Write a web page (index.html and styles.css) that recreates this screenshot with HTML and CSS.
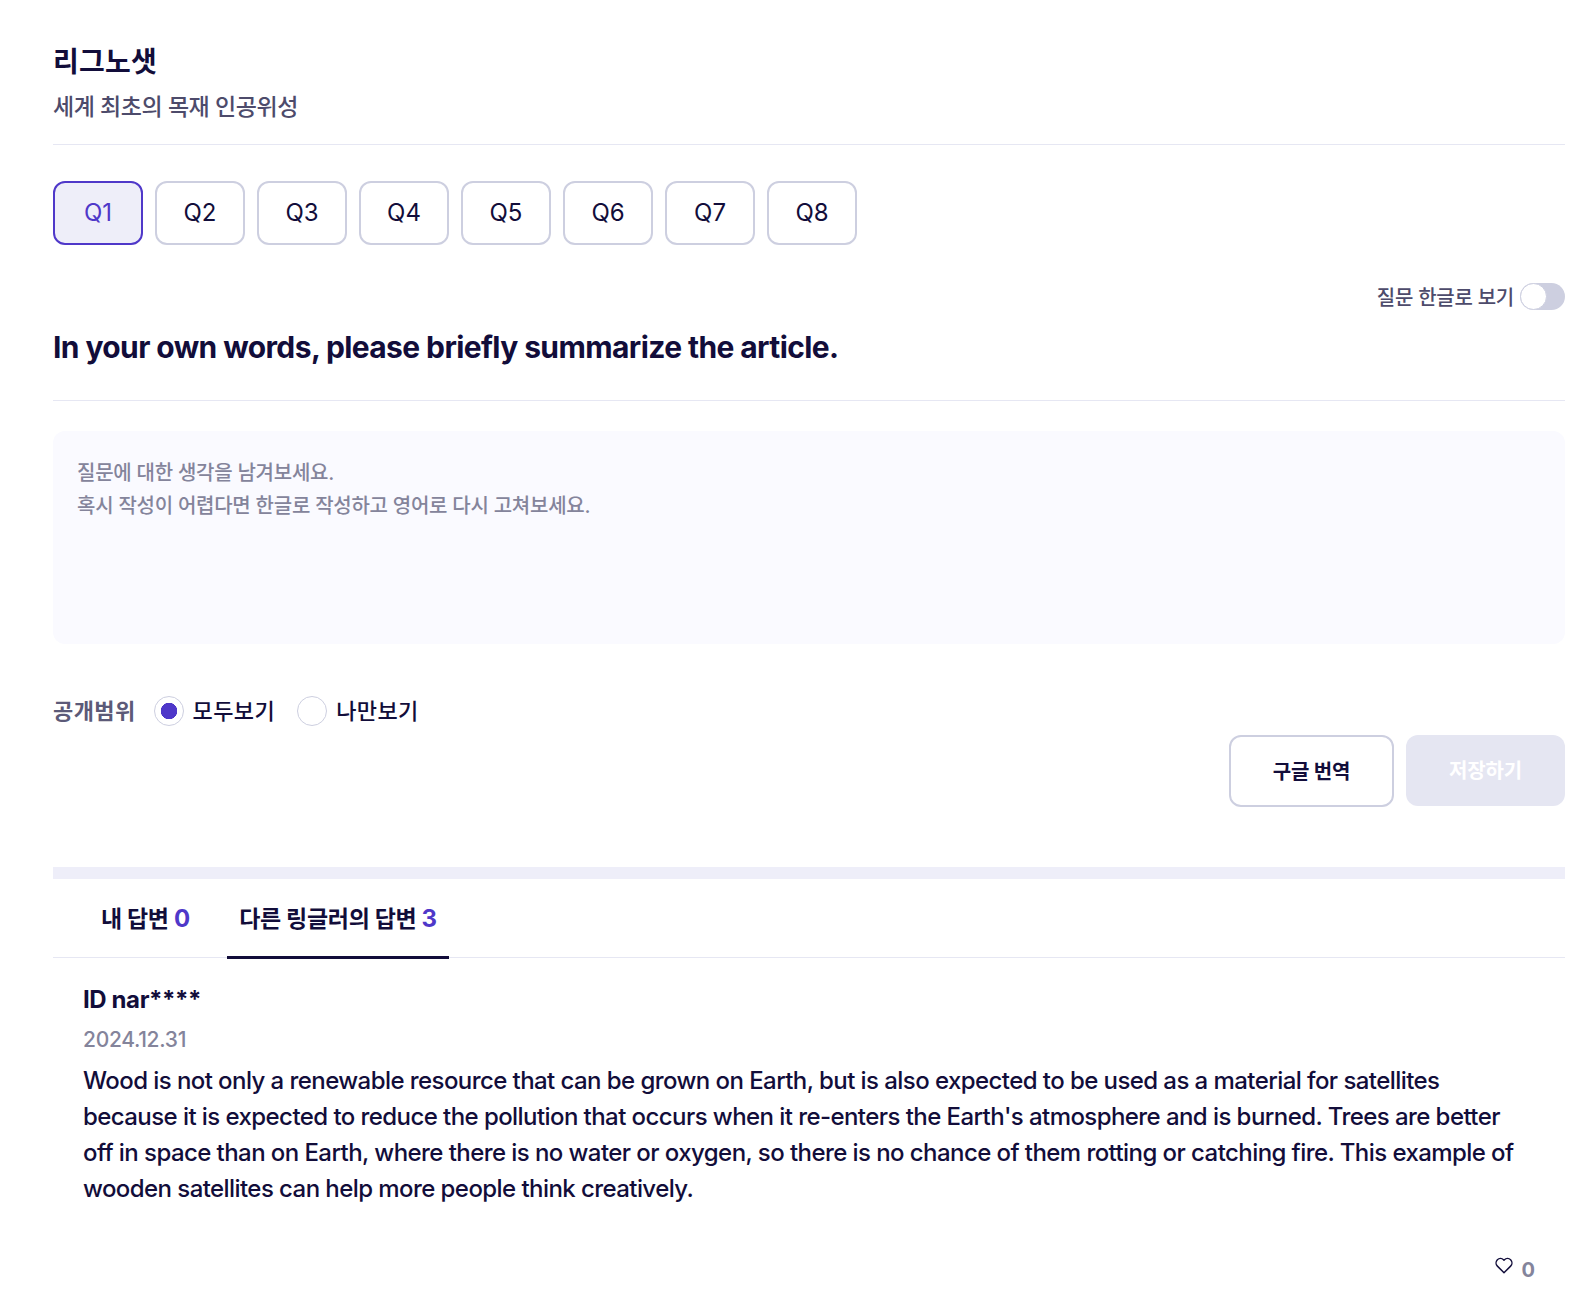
FILE: index.html
```html
<!DOCTYPE html>
<html lang="ko">
<head>
<meta charset="utf-8">
<title>리그노샛</title>
<link rel="stylesheet" href="styles.css">
</head>
<body>
<main class="page">
  <header class="head">
    <h1 class="title">리그노샛</h1>
    <p class="subtitle">세계 최초의 목재 인공위성</p>
  </header>
  <nav class="qtabs">
    <button class="qtab active">Q1</button>
    <button class="qtab">Q2</button>
    <button class="qtab">Q3</button>
    <button class="qtab">Q4</button>
    <button class="qtab">Q5</button>
    <button class="qtab">Q6</button>
    <button class="qtab">Q7</button>
    <button class="qtab">Q8</button>
  </nav>
  <div class="toggle-row">
    <span class="toggle-label">질문 한글로 보기</span>
    <span class="toggle"><span class="knob"></span></span>
  </div>
  <h2 class="question">In your own words, please briefly summarize the article.</h2>
  <div class="answer-box">질문에 대한 생각을 남겨보세요.<br>혹시 작성이 어렵다면 한글로 작성하고 영어로 다시 고쳐보세요.</div>
  <div class="scope">
    <span class="scope-label">공개범위</span>
    <span class="radio on"></span><span class="radio-text">모두보기</span>
    <span class="radio"></span><span class="radio-text">나만보기</span>
  </div>
  <div class="actions">
    <button class="btn outline">구글 번역</button>
    <button class="btn disabled">저장하기</button>
  </div>
  <div class="band"></div>
  <div class="tabs">
    <div class="tab">내 답변 <em>0</em></div>
    <div class="tab current">다른 링글러의 답변 <em>3</em></div>
  </div>
  <article class="reply">
    <div class="reply-id">ID nar****</div>
    <div class="reply-date">2024.12.31</div>
    <p class="reply-body">Wood is not only a renewable resource that can be grown on Earth, but is also expected to be used as a material for satellites because it is expected to reduce the pollution that occurs when it re-enters the Earth's atmosphere and is burned. Trees are better off in space than on Earth, where there is no water or oxygen, so there is no chance of them rotting or catching fire. This example of wooden satellites can help more people think creatively.</p>
    <div class="likes">
      <svg class="heart" width="18" height="17" viewBox="0 0 20 19" fill="none"><path d="M10 17.6 2.6 10.2C.6 8.2.7 5 2.6 3c2-2 5-1.9 6.9.1l.5.6.5-.6c1.9-2 4.9-2.1 6.9-.1 1.9 2 2 5.2 0 7.2L10 17.6Z" stroke="#120d3a" stroke-width="1.6" stroke-linejoin="round"/></svg>
      <span class="like-count">0</span>
    </div>
  </article>
</main>
</body>
</html>
```
FILE: styles.css
```css
* { box-sizing: border-box; }
html, body { margin: 0; background: #fff; }
body {
  font-family: Inter, "Noto Sans CJK KR", sans-serif;
  color: #120d3a;
  height: 1302px;
  overflow: hidden;
}
.page { padding: 0 19px 0 53px; }
button { font-family: inherit; cursor: pointer; }

.head { padding-top: 41px; height: 145px; border-bottom: 1px solid #e6e7f3; }
.title { margin: 0; font-size: 28px; line-height: 42px; font-weight: 700; letter-spacing: 0.2px; }
.subtitle { margin: 8px 0 0; font-size: 23px; line-height: 33px; font-weight: 500; color: #4d4b6b; letter-spacing: -0.45px; }

.qtabs { display: flex; gap: 12px; margin-top: 36px; }
.qtab {
  width: 90px; height: 64px; padding: 0 0 2px;
  background: #fff; border: 2px solid #cdcfe0; border-radius: 12px;
  font-size: 24px; color: #120d3a;
}
.qtab.active { background: #eeeef9; border-color: #4f38c9; color: #4f38c9; }

.toggle-row { display: flex; justify-content: flex-end; align-items: center; gap: 6px; margin-top: 38px; height: 27px; }
.toggle-label { font-size: 20px; font-weight: 500; color: #4d4b6b; letter-spacing: -0.25px; }
.toggle { display: block; width: 45px; height: 27px; border-radius: 14px; background: #cdcfe0; }
.knob { display: block; width: 27px; height: 27px; border-radius: 50%; background: #fff; border: 1px solid #cdcfe0; }

.question { margin: 18px 0 0; height: 73px; font-size: 30px; line-height: 39px; font-weight: 700; letter-spacing: -0.6px; border-bottom: 1px solid #e6e7f3; }

.answer-box {
  margin-top: 30px; height: 213px; padding: 26px 24px;
  background: #fafaff; border-radius: 12px;
  font-size: 20px; font-weight: 500; line-height: 32.5px; color: #84849b; letter-spacing: -0.25px;
}

.scope { display: flex; align-items: center; margin-top: 52px; height: 30px; font-size: 22px; font-weight: 500; letter-spacing: 0.4px; }
.scope-label { font-weight: 700; color: #5c5a78; margin-right: 18px; padding-bottom: 5px; }
.radio { display: block; width: 30px; height: 30px; border: 1px solid #cdcfe0; border-radius: 50%; margin-right: 9px; }
.radio.on { background: radial-gradient(circle, #4f38c9 0 8px, transparent 8.5px); }
.radio-text { margin-right: 22px; color: #120d3a; padding-bottom: 5px; }

.actions { display: flex; justify-content: flex-end; gap: 12px; margin-top: 9px; }
.btn { height: 72px; border-radius: 12px; font-size: 20px; font-weight: 700; padding: 0 0 2px; letter-spacing: -0.2px; }
.btn.outline { width: 165px; background: #fff; border: 2px solid #cdcfe0; color: #120d3a; }
.btn.disabled { width: 159px; background: #e5e6f2; border: 0; color: #fff; height: 71px; }

.band { margin-top: 60px; height: 12px; background: #eeeef9; }

.tabs { display: flex; height: 79px; border-bottom: 1px solid #e6e7f3; }
.tab { font-size: 23px; font-weight: 700; height: 79px; line-height: 80px; letter-spacing: -0.3px; white-space: pre; }
.tab:first-child { width: 174px; padding-left: 48px; }
.tab.current { width: 222px; text-align: center; border-bottom: 3px solid #120d3a; height: 80px; }
.tab em { font-style: normal; color: #4f38c9; font-size: 24px; }

.reply { padding: 24px 30px 0; }
.reply-id { font-size: 24px; line-height: 36px; font-weight: 700; letter-spacing: -0.4px; }
.reply-date { margin-top: 4px; font-size: 21px; line-height: 36px; font-weight: 500; color: #84849b; letter-spacing: -0.3px; }
.reply-body { margin: 5px 0 0; padding-right: 14px; font-size: 24px; line-height: 36px; font-weight: 500; letter-spacing: -0.57px; }
.likes { display: flex; justify-content: flex-end; align-items: flex-start; gap: 9px; margin-top: 50px; }
.like-count { font-size: 20px; line-height: 24px; margin-top: 1px; font-weight: 700; color: #84849b; }
```
